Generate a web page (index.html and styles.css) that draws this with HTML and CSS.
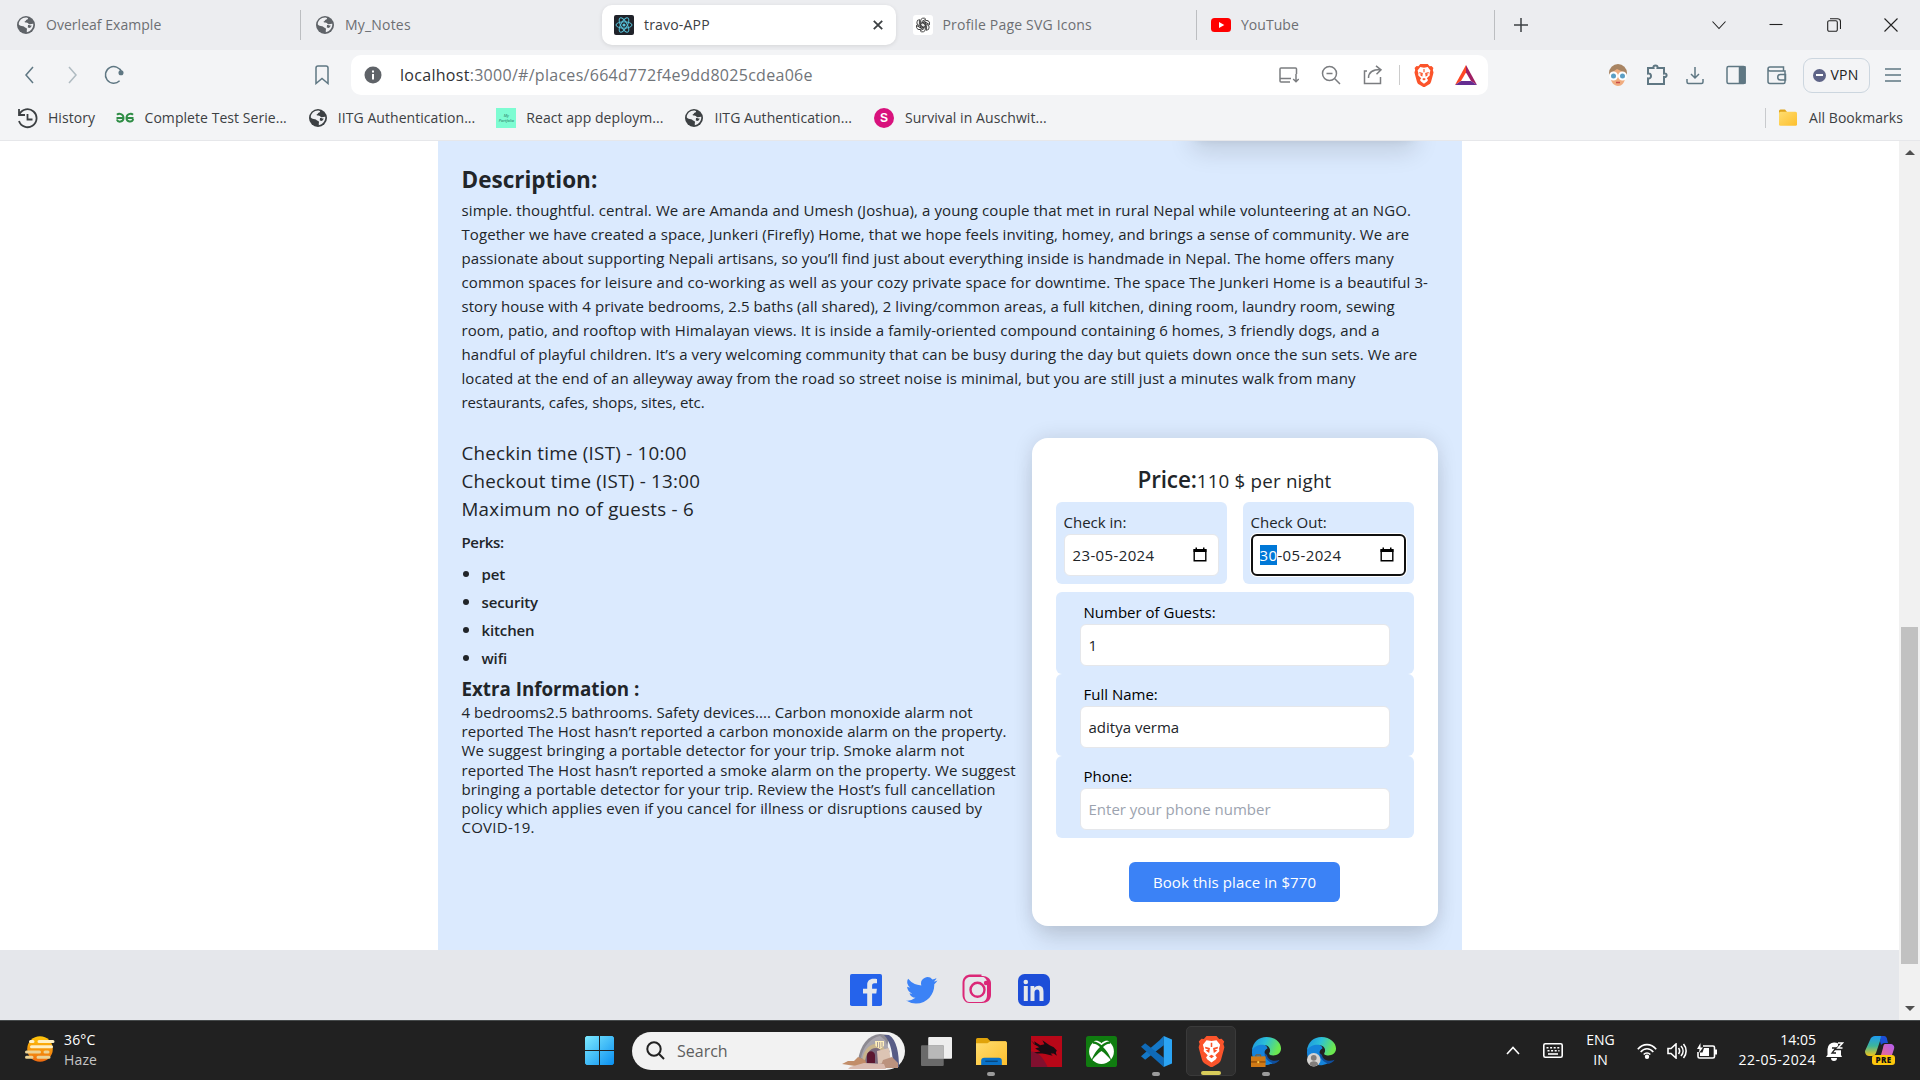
FILE: index.html
```html
<!DOCTYPE html>
<html lang="en">
<head>
<meta charset="utf-8">
<title>travo-APP</title>
<link rel="stylesheet" href="styles.css">
</head>
<body>
<svg class="defs" width="0" height="0" aria-hidden="true">
  <defs>
    <symbol id="globe" viewBox="0 0 18 18"><circle cx="9" cy="9" r="9"/><path fill="#eff0f3" d="M10.2 1.7c1 .2 1.2 1 .5 1.600-.5.5-1.700.4-1.800 1.200-.1.7-1.500.7-1.300 1.600.1.700 1.500.4 2.500.6 1.200.2 1.300 1.600 2.600 1.600 1.500 0 2.700-.8 3.600-.5.300 4-2.600 7.800-6.500 8.400.2-1-.2-1.700.1-2.500.4-1-.3-1.700-1.200-1.900-1-.2-1.300-1.500-2.700-1.500-1.600 0-3.300-.8-4.200-1.700C1.600 4.500 5.600 1 10.200 1.700z"/><path d="M11 9c1.500-.2 2.500 1 4 .6l-2 2.400-2.200-.6z"/></symbol>
    <symbol id="lion" viewBox="0 0 24 28"><path fill="#fb542b" d="M7.500 0h9l2.400 2.700 2.200-.3L23.500 5l-.8 2.200 1 3-3.100 11.300c-.6 2-1.600 2.800-3.200 3.900L12 28.500l-5.400-3.100c-1.600-1.100-2.600-1.900-3.200-3.900L.3 10.200l1-3L.5 5l2.400-2.600 2.200.3z"/><path fill="#fff" d="M12 4.600l4.500-.8 3.300 4-1 3.500.3 2.500-3.700 3.600 1.500 2.100-1.200 1.700L12 24l-3.700-2.800-1.200-1.700 1.500-2.100-3.700-3.600.3-2.500-1-3.500 3.300-4z"/><path fill="#fb542b" d="M6.300 9.700l4.300 1.200-.7 4.500-3.200-2.200 2.600-.9-3-1.100zM17.700 9.700l-4.300 1.200.7 4.500 3.200-2.200-2.600-.9 3-1.100zM9.700 18.300L12 17l2.300 1.300L12 20zM11.300 6h1.400v4h-1.400z"/></symbol>
    <linearGradient id="edgeTop" x1="0" y1="0" x2="1" y2=".3"><stop offset="0" stop-color="#1b8fe0"/><stop offset=".5" stop-color="#2cc0d8"/><stop offset="1" stop-color="#6ce84f"/></linearGradient>
    <symbol id="edge" viewBox="0 0 32 32"><path fill="#0f4f9e" d="M10 14c-2 8 3 15 11 15 4 0 7-2 8.500-4.500-5 2-12 1-13-5z"/><path fill="#1584db" d="M1 17C1 9 7 7 11 8c4 .6 6 3 6 5-3 1-4 5-2 9 1.500 3 4 5 7 6-8 5-21 1-21-11z"/><path fill="url(#edgeTop)" d="M1 15C2 6 8 1 16 1c9 0 15 6 15 12 0 5-4 7-8 7-3 0-5-1-4-2.500 2-3 0-8.500-7-8.500-5 0-9 2-11 6z"/></symbol>
    <linearGradient id="win" x1="0" y1="0" x2="1" y2="1"><stop offset="0" stop-color="#7deaff"/><stop offset="1" stop-color="#0a8ff0"/></linearGradient>
    <linearGradient id="sun" x1="0" y1="0" x2="0" y2="1"><stop offset="0" stop-color="#ffc70a"/><stop offset="1" stop-color="#ee6a10"/></linearGradient>
    <linearGradient id="folder" x1="0" y1="0" x2="1" y2="1"><stop offset="0" stop-color="#ffdd70"/><stop offset="1" stop-color="#fdbf2d"/></linearGradient>
    <linearGradient id="cop1" x1="0" y1="0" x2="0" y2="1"><stop offset="0" stop-color="#1e9bf0"/><stop offset=".5" stop-color="#3db59a"/><stop offset="1" stop-color="#f5c518"/></linearGradient>
    <linearGradient id="cop2" x1="0" y1="1" x2="1" y2="0"><stop offset="0" stop-color="#ff6f70"/><stop offset="1" stop-color="#b15df2"/></linearGradient>
    <symbol id="calendar" viewBox="0 0 14 15"><path fill="none" stroke="#000" stroke-width="1.400" d="M1.200 3h11.600v10.800H1.200z"/><path d="M.5 2h13v3H.5zM2.500.5H4V3H2.500zM10 .5h1.500V3H10z"/></symbol>
  </defs>
</svg>

<header class="browser">
  <div class="tabs">
    <div class="tab tab-first"><svg class="i18 gray"><use href="#globe"/></svg><span>Overleaf Example</span></div>
    <div class="tab tab-notes"><svg class="i18 gray"><use href="#globe"/></svg><span class="wide">My_Notes</span></div>
    <div class="tab tab-active">
      <svg class="i20" viewBox="0 0 20 20"><rect width="20" height="20" rx="2" fill="#20232a"/><g fill="none" stroke="#58c4dc" stroke-width="1"><ellipse cx="10" cy="10" rx="8" ry="3.200"/><ellipse cx="10" cy="10" rx="8" ry="3.200" transform="rotate(60 10 10)"/><ellipse cx="10" cy="10" rx="8" ry="3.200" transform="rotate(120 10 10)"/></g><circle cx="10" cy="10" r="1.600" fill="#58c4dc"/></svg>
      <span class="wide">travo-APP</span>
      <svg class="close" viewBox="0 0 10 10"><path d="M.8.8l8.400 8.400M9.200.8L.8 9.200"/></svg>
    </div>
    <div class="tab tab-gpt">
      <svg class="i20" viewBox="0 0 20 20"><rect width="20" height="20" rx="3" fill="#fff"/><g fill="none" stroke="#333" stroke-width=".9"><path id="petal" d="M7.600 11.300V6a2.900 2.900 0 0 1 5.200-1.800L9 6.400v2.900"/><use href="#petal" transform="rotate(60 10 10)"/><use href="#petal" transform="rotate(120 10 10)"/><use href="#petal" transform="rotate(180 10 10)"/><use href="#petal" transform="rotate(240 10 10)"/><use href="#petal" transform="rotate(300 10 10)"/></g></svg>
      <span class="wide">Profile Page SVG Icons</span>
    </div>
    <div class="tab tab-yt">
      <svg class="i20" viewBox="0 0 20 20"><rect y="3" width="20" height="14" rx="3.500" fill="#f00"/><path fill="#fff" d="M8 7l5.300 3L8 13z"/></svg>
      <span>YouTube</span>
    </div>
    <svg class="plus" viewBox="0 0 14 14"><path d="M7 0v14M0 7h14"/></svg>
    <div class="window-buttons">
      <svg viewBox="0 0 14 14"><path d="M.5 3.500L7 10.500l6.500-7"/></svg>
      <svg viewBox="0 0 14 14"><path d="M.5 6.500h13"/></svg>
      <svg viewBox="0 0 14 14"><path d="M.7 4.200a1.500 1.500 0 0 1 1.500-1.500h6.600a1.500 1.500 0 0 1 1.500 1.500v7.600a1.500 1.500 0 0 1-1.500 1.500H2.200a1.500 1.500 0 0 1-1.500-1.500zM3 .7h7.500a3 3 0 0 1 3 3V11"/></svg>
      <svg viewBox="0 0 14 14"><path d="M.5.500l13 13M13.500.5l-13 13"/></svg>
    </div>
  </div>

  <div class="toolbar">
    <div class="nav">
      <svg viewBox="0 0 20 20"><path d="M13 2L6 10l7 8"/></svg>
      <svg class="dim" viewBox="0 0 20 20"><path d="M7 2l7 8-7 8"/></svg>
      <svg viewBox="0 0 20 20"><path d="M15.600 15.800A8.300 8.300 0 1 1 17.500 7"/><circle cx="17" cy="7.800" r="1.800" fill="#5f7783"/></svg>
    </div>
    <svg class="mark" viewBox="0 0 20 20"><path d="M4 3a2 2 0 0 1 2-2h8a2 2 0 0 1 2 2v15.500l-6-5-6 5z"/></svg>
    <div class="address">
      <svg class="info" viewBox="0 0 18 18"><circle cx="9" cy="9" r="8.500" fill="#5f6368" stroke="none"/><path stroke="#fff" stroke-width="2" d="M9 8v5.500M9 4.500v2"/></svg>
      <span class="url"><b>localhost</b>:3000/#/places/664d772f4e9dd8025cdea06e</span>
      <div class="address-icons">
        <svg viewBox="0 0 20 20"><path d="M11 17H2a1 1 0 0 1-1-1V4a1 1 0 0 1 1-1h14.500a1 1 0 0 1 1 1v5M1 13.500h11M17 9v7.500M14.200 14l2.800 2.800 2.800-2.800"/></svg>
        <svg viewBox="0 0 20 20"><circle cx="8.500" cy="8.500" r="7"/><path d="M13.800 13.800L19 19M5.500 8.500h6"/></svg>
        <svg viewBox="0 0 20 20"><path d="M4 6H1.500v12.500h16V12M5.500 13c0-5 3.500-8.500 12-8.500M13 .8l5 4-4.500 4.400"/></svg>
      </div>
      <i class="bar"></i>
      <svg class="brave" viewBox="0 0 24 28"><use href="#lion"/></svg>
      <svg class="bat" viewBox="0 0 22 20"><path fill="#ff4724" d="M11 0v7.500L6 16l-6 4z"/><path fill="#9e1f63" d="M11 0l11 20-6-4-5-8.500z"/><path fill="#662d91" d="M0 20l6-4h10l6 4z"/></svg>
    </div>
    <div class="extensions">
      <svg class="face" viewBox="0 0 20 22"><circle cx="10" cy="9" r="9" fill="#a88463"/><path fill="#f0ac7f" d="M3 9l6-4 8 4v6c-1 4-3 7-7 7s-7-4-7-7z"/><g fill="#5c9fc5" stroke="#fff" stroke-width="2"><circle cx="5.500" cy="12" r="3.500"/><circle cx="14.500" cy="12" r="3.500"/></g><path stroke="#c94a48" stroke-width="1.500" d="M8 18.500h4"/></svg>
      <svg class="puzzle" viewBox="0 0 22 22"><path d="M2 4h5.500c-.8-3.500 4.800-3.500 4 0H18v5.500c3.500-.8 3.500 4.300 0 3.500V20H2v-5.500c4 .8 4-6 0-5z"/></svg>
      <svg class="download" viewBox="0 0 20 20"><path d="M10 2v11M6 9l4 4 4-4M2 14v3a1.500 1.500 0 0 0 1.500 1.500h13A1.500 1.500 0 0 0 18 17v-3"/></svg>
      <svg viewBox="0 0 20 20"><rect x="1" y="1.500" width="18" height="17" rx="1.500"/><path fill="#5f7783" d="M13.500 2H19v16h-5.500z"/></svg>
      <svg viewBox="0 0 20 20"><path d="M1 4v12.500a2 2 0 0 0 2 2h13.500a1.500 1.500 0 0 0 1.500-1.500V6H3a2 2 0 0 1 0-4h13.500v4M18.500 9.500h-5a2.500 2.500 0 0 0 0 5.500h5z"/></svg>
    </div>
    <div class="vpn"><i></i><span>VPN</span></div>
    <svg class="menu" viewBox="0 0 16 14"><path d="M0 1h16M0 7h16M0 13h16"/></svg>
  </div>

  <nav class="bookmarks">
    <a><svg class="i21" viewBox="0 0 21 21"><path fill="none" stroke="#3c4043" stroke-width="1.800" d="M2.500 6.200A9 9 0 1 1 2 13M2 1v6h6M10.500 6v5.500h5"/></svg><span>History</span></a>
    <a class="b-gfg"><svg class="i20" viewBox="0 0 20 20"><path fill="none" stroke="#2f8d46" stroke-width="2" d="M9 10H1.500M2 6.800C4 4.800 8.500 6 8.500 10S3 15 1.800 11.500M11 10h7.500M18 6.800C16 4.800 11.500 6 11.500 10s5.500 5 6.700 1"/></svg><span>Complete Test Serie...</span></a>
    <a class="b-iitg"><svg class="i18 dark"><use href="#globe"/></svg><span>IITG Authentication...</span></a>
    <a class="b-react"><span class="my-app"><em>My</em><em>Portfolio</em></span><span>React app deploym...</span></a>
    <a class="b-iitg"><svg class="i18 dark"><use href="#globe"/></svg><span>IITG Authentication...</span></a>
    <a class="b-pink"><span class="pink-s">S</span><span>Survival in Auschwit...</span></a>
    <a class="b-all"><svg class="i20" viewBox="0 0 20 20"><path fill="#e0a51c" d="M1 3a1.500 1.500 0 0 1 1.500-1.500H7L9 4h9v8H1z"/><rect x="1" y="3.800" width="18" height="14" rx="1.500" fill="url(#folder)"/></svg><span>All Bookmarks</span></a>
  </nav>
</header>

<div class="viewport">
  <div class="page">
    <main class="place">
      <div class="photo-button"></div>
      <h2>Description:</h2>
      <p class="description"><span>simple. thoughtful. central. We are Amanda and Umesh (Joshua), a young couple that met in rural Nepal while volunteering at an NGO.</span>
        <span>Together we have created a space, Junkeri (Firefly) Home, that we hope feels inviting, homey, and brings a sense of community. We are</span>
        <span>passionate about supporting Nepali artisans, so you’ll find just about everything inside is handmade in Nepal. The home offers many</span>
        <span>common spaces for leisure and co-working as well as your cozy private space for downtime. The space The Junkeri Home is a beautiful 3-</span>
        <span>story house with 4 private bedrooms, 2.5 baths (all shared), 2 living/common areas, a full kitchen, dining room, laundry room, sewing</span>
        <span>room, patio, and rooftop with Himalayan views. It is inside a family-oriented compound containing 6 homes, 3 friendly dogs, and a</span>
        <span>handful of playful children. It’s a very welcoming community that can be busy during the day but quiets down once the sun sets. We are</span>
        <span>located at the end of an alleyway away from the road so street noise is minimal, but you are still just a minutes walk from many</span>
        <span>restaurants, cafes, shops, sites, etc.</span></p>
      <div class="columns">
        <section class="details">
          <div class="times">Checkin time (IST) - 10:00<br>Checkout time (IST) - 13:00<br>Maximum no of guests - 6</div>
          <h4>Perks:</h4>
          <ul><li>pet</li><li>security</li><li>kitchen</li><li>wifi</li></ul>
          <h3>Extra Information :</h3>
          <p class="extra"><span>4 bedrooms2.5 bathrooms. Safety devices.... Carbon monoxide alarm not</span>
            <span>reported The Host hasn’t reported a carbon monoxide alarm on the property.</span>
            <span>We suggest bringing a portable detector for your trip. Smoke alarm not</span>
            <span>reported The Host hasn’t reported a smoke alarm on the property. We suggest</span>
            <span>bringing a portable detector for your trip. Review the Host’s full cancellation</span>
            <span>policy which applies even if you cancel for illness or disruptions caused by</span>
            <span>COVID-19.</span></p>
        </section>
        <form class="booking">
          <div class="price"><b>Price:</b><span>110 $ per night</span></div>
          <div class="dates">
            <div class="date"><label>Check in:</label><div class="date-field"><span class="digits">23-05-2024</span><svg><use href="#calendar"/></svg></div></div>
            <div class="date"><label>Check Out:</label><div class="date-field focused"><span class="digits"><mark>30</mark>-05-2024</span><svg><use href="#calendar"/></svg></div></div>
          </div>
          <div class="field"><label>Number of Guests:</label><input type="text" value="1"></div>
          <div class="field"><label>Full Name:</label><input type="text" value="aditya verma"></div>
          <div class="field"><label>Phone:</label><input type="text" placeholder="Enter your phone number"></div>
          <button type="button">Book this place in $770</button>
        </form>
      </div>
    </main>
    <footer class="social">
      <svg viewBox="0 0 32 32"><rect width="32" height="32" rx="1.800" fill="#2563eb"/><path fill="#e5e7eb" d="M17.200 32V19.600H13v-4.800h4.200v-3.700C17.200 7 19.700 4.800 23.300 4.800c1.800 0 3.300.1 3.700.2v4.300h-2.500c-2 0-2.400 1-2.400 2.400v3.100h4.800l-.6 4.800h-4.200V32z"/></svg>
      <svg viewBox="0 0 24 24"><path fill="#3b82f6" d="M23.600 4.900a9.600 9.600 0 0 1-2.800.8 4.900 4.900 0 0 0 2.100-2.700 9.700 9.700 0 0 1-3.100 1.200 4.800 4.800 0 0 0-8.300 4.400A13.700 13.700 0 0 1 1.600 3.600a4.800 4.800 0 0 0 1.500 6.500 4.800 4.800 0 0 1-2.200-.6c0 2.300 1.600 4.400 3.900 4.900a4.900 4.900 0 0 1-2.200.1 4.900 4.900 0 0 0 4.500 3.400A9.700 9.700 0 0 1 0 19.900a13.700 13.700 0 0 0 7.400 2.200c9 0 14.100-7.600 13.800-14.500a9.900 9.900 0 0 0 2.400-2.700z"/></svg>
      <svg viewBox="0 0 32 32"><path fill="#db2777" fill-rule="evenodd" d="M8 .5h11.500V2h1.500c4 0 8 3 8 7v12c0 5-4 8-8.500 8H7c-3 0-6.500-3.500-6.500-8V9C.500 4 4 .5 8 .5zM8 3C5 3 2.500 5.500 2.500 9v12c0 4 2 7 4.500 7h12.500c3.500 0 5.500-3 5.500-7V9c0-3.500-2-6-4.500-6z"/><circle cx="15.500" cy="15.800" r="7" fill="none" stroke="#db2777" stroke-width="2.400"/><circle cx="24" cy="9" r="2.200" fill="#db2777"/></svg>
      <svg viewBox="0 0 32 32"><rect width="32" height="32" rx="6.500" fill="#1d4ed8"/><g fill="#e5e7eb"><circle cx="7.800" cy="8" r="2.300"/><path d="M5.800 12h4v15h-4zM12.500 12h3.800v2c1-1.600 2.400-2.300 4.300-2.300 3.600 0 4.900 2.300 4.900 6V27h-4v-8.200c0-2-.5-3.300-2.300-3.300-2 0-2.700 1.500-2.700 3.300V27h-4z"/></g></svg>
    </footer>
  </div>
  <div class="scrollbar"><i class="up"></i><div class="thumb"></div><i class="down"></i></div>
</div>

<div class="taskbar">
  <svg class="weather" viewBox="0 0 30 30"><circle cx="15" cy="15" r="12.800" fill="url(#sun)"/><g stroke="#fff0c4" stroke-width="3" stroke-linecap="round"><path d="M5.500 7.500H8M14 7.500h14M6.500 12.800h20"/><path stroke="#ecd394" d="M1.500 18h13M20 18h3M1.500 23.300H7M13 23.300h11"/></g></svg>
  <div class="weather-text"><span>36°C</span><span class="soft">Haze</span></div>
  <svg class="start" viewBox="0 0 29 29"><path fill="url(#win)" d="M1.500 0H14v14H0V1.500zM15 0h12.500L29 1.500V14H15zM0 15h14v14H1.500L0 27.500zM15 15h14v12.500L27.500 29H15z"/></svg>
  <div class="search">
    <svg class="lens" viewBox="0 0 19 19"><circle cx="8" cy="8" r="6.700"/><path d="M12.800 12.800L18 18"/></svg>
    <span>Search</span>
    <svg class="arch" viewBox="0 0 58 36"><path fill="#8d8a92" d="M16 28C18 12 26 2 38 1l9 1-4 30H18z"/><path fill="#575c86" d="M42 2l5 0c8 5 10 19 10 32l-6 1c0-14-2-26-9-33z"/><path fill="#a9a5ad" d="M19 25C21 14 28 5 38 3l5 4 5 12-12 8z"/><path fill="#c9b48c" d="M20 31c0-12 6-20 14-20 6 0 12 5 12 20z"/><path fill="#78687b" d="M23 31c0-10 5-16 11-16 5 0 8 5 8 16z"/><path fill="#5b1730" d="M25 30v-8c1-5 7-5 8 0v8z"/><path fill="#dcc4b4" d="M35 18l12-3 2 15-13 1z"/><path fill="#fff0bd" d="M33 8h9v5l-4 3-4.500-3z"/><path fill="#a89a98" d="M35 9h1v5h-1zM37.200 9h1v6h-1zM39.500 9h1v5h-1z"/><path fill="#c28d69" d="M0 31l6-3h6l4-4 7 3 2 5-5 2z"/><path fill="#bb927e" d="M41 27l9-3 6 6v5H38z"/><path fill="#dabbb0" d="M8 34l14-4 20 1 2 5H6z"/></svg>
  </div>
  <div class="apps">
    <div class="app"><svg viewBox="0 0 30 30"><rect x="7" y="1" width="23" height="21" rx="1" fill="#eee"/><rect y="9" width="22" height="20" rx="1" fill="#777" opacity=".85"/><path fill="#b8b8b8" d="M7 9h15v13H7z"/></svg></div>
    <div class="app open"><svg viewBox="0 0 30 30"><path fill="#e0a30a" d="M0 3.500A1.500 1.500 0 0 1 1.500 2H11l3 3h15v8H0z"/><path fill="url(#folder)" d="M0 7h11l3-2h14.500A1.500 1.500 0 0 1 30 6.500V28H0z"/><path fill="#0a72c8" d="M5 28v-4a3 3 0 0 1 3-3h14a3 3 0 0 1 3 3v4z"/><path stroke="#07477e" stroke-width="1.400" d="M9 24.500h12"/></svg></div>
    <div class="app"><svg viewBox="0 0 30 30"><path fill="#b80718" d="M0 0h30v30H0z"/><path fill="#81102f" d="M0 15c7 0 12 6 16 15H0z"/><path fill="#190d13" d="M0 4l4 4-1-3 6 4 4-1-2-4 7 5 4 2 3 3-1 2 1 3-3-2-3 0 2 2-5-1c-5-2-9 0-13-2l6-1-5-3 4-1-5-3z"/></svg></div>
    <div class="app"><svg viewBox="0 0 30 30"><rect width="30" height="30" rx="2.500" fill="#107c10"/><circle cx="15" cy="15" r="12" fill="#fff"/><path fill="#107c10" d="M8.500 4.500C11 4 14 6 15 7c1-1 4-3 6.500-2.500C19 2.500 17 2 15 2s-4 .5-6.500 2.500zM15 9.500C10.500 13 6 20 5.500 24 8.500 20 12 16.500 15 14.500c3 2 6.500 5.500 9.500 9.500C24 20 19.500 13 15 9.500z"/><path fill="none" stroke="#107c10" stroke-width="2.200" d="M6.500 6.500c3-.5 6 1.500 8.500 4 2.500-2.500 5.500-4.500 8.500-4"/></svg></div>
    <div class="app open"><svg viewBox="0 0 30 30"><path fill="#1478c8" d="M22 0v9L4 23l-4-3.500L18 4z"/><path fill="#0f6ab8" d="M0 10.500L4 7l18 14v9z"/><path fill="#2ba4f4" d="M22 0l8 3.500v23L22 30z"/></svg></div>
    <div class="app current"><svg viewBox="0 0 24 28"><use href="#lion"/></svg></div>
    <div class="app open"><svg viewBox="0 0 32 32"><use href="#edge"/><path fill="#d07a16" d="M0 21h15v11H0z"/><path fill="none" stroke="#9a550c" d="M5 21v-1.500h5V21"/><path fill="#95500b" d="M0 26h15v1.500H0z"/><path fill="#ffd24a" d="M6.500 26h2v2h-2z"/></svg></div>
    <div class="app"><svg viewBox="0 0 32 32"><use href="#edge"/><circle cx="8" cy="24.500" r="7" fill="#d6d4d2"/><circle cx="8" cy="22.500" r="3" fill="#817d7b"/><path fill="#817d7b" d="M3.500 29.500c.5-4.500 8.500-4.500 9 0-2 2.500-7 2.500-9 0z"/></svg></div>
  </div>
  <div class="tray">
    <svg class="t-chev" viewBox="0 0 14 9"><path d="M1 8l6-6.500L13 8"/></svg>
    <svg class="t-key" viewBox="0 0 20 15"><rect x=".8" y=".8" width="18.400" height="13.400" rx="1.500"/><path stroke-dasharray="2 1.600" d="M3.500 4.700h13M4.500 7.700h12"/><path d="M5 11h10"/></svg>
    <div class="lang"><span>ENG</span><span>IN</span></div>
    <svg class="t-wifi" viewBox="0 0 20 16"><path d="M.8 6.200C6 .1 14 .1 19.200 6.200M3.700 9c3.500-4.300 9.100-4.300 12.600 0M6.700 11.600c1.900-2.200 4.700-2.200 6.600 0"/><circle cx="10" cy="13.800" r="1.400" fill="#fff"/></svg>
    <svg class="t-vol" viewBox="0 0 20 16"><path d="M1 5.500h3l5-4.500v14l-5-4.500H1zM11.500 5c1.300 1.700 1.300 4.300 0 6M14 3c2.700 3 2.700 7 0 10M16.500 1c3.500 4 3.500 10 0 14"/></svg>
    <svg class="t-bat" viewBox="0 0 20 16"><path d="M6 3h10a1.500 1.500 0 0 1 1.500 1.500v9A1.500 1.500 0 0 1 16 15H2.500A1.500 1.500 0 0 1 1 13.500V9"/><path fill="#fff" stroke="none" d="M7 5h5v8H3V9.500h2.500zM18 6.500h2v5h-2zM3.500 0L0 6h2.500L2 10l4-5.500H3.500z"/></svg>
    <div class="clock"><span>14:05</span><span class="digits">22-05-2024</span></div>
    <svg class="t-bell" viewBox="0 0 18 20"><path fill="#fff" d="M1.500 14V8a6.500 6.500 0 0 1 7-6.500l3 .5 3.500 6v6l1 2H0zM5 17h6a3 3 0 0 1-6 0z"/><path fill="none" stroke="#222" stroke-width="1.300" d="M6 7h4l-4 5h4"/><path fill="none" stroke="#222" stroke-width="3.500" d="M12 2.500h4.500L12 7.500h4.500"/><path fill="none" stroke="#fff" stroke-width="1.500" d="M12 2h4.500L12 7h4.500"/></svg>
    <div class="copilot"><svg viewBox="0 0 30 30"><path fill="url(#cop2)" d="M20 8h5c3 0 5 2 4 5l-2 6c-1 3-3 5-5 5H12c2 0 3-3 4-5l2-7c.5-3 1-4 2-4z"/><path fill="url(#cop1)" d="M5 4c1-3 3-4 5-4h9c-2 1-3 2-4 5l-4 12c-1 2-2 3-4 3H4c-3 0-4-3-4-5z"/><path fill="#1b4fd6" d="M16 0h3c2 0 3 2 3 3l1 4h-4c-1 0-2 1-3 2l-1-4z"/></svg><b>PRE</b></div>
  </div>
</div>
</body>
</html>
```
FILE: styles.css
```css
* { box-sizing: border-box; margin: 0; padding: 0; }
body { width: 1920px; height: 1080px; overflow: hidden; display: flex; flex-direction: column; font: 400 15px/24px "Open Sans", "Noto Sans", sans-serif; color: #212529; background: #fff; }
svg { display: block; flex: none; }
.defs { position: absolute; }
.i18 { width: 18px; height: 18px; }
.i20 { width: 20px; height: 20px; }
.i21 { width: 21px; height: 21px; }
.gray { fill: #5f6368; }
.dark { fill: #3c4043; }

/* Browser chrome */
.browser { height: 141px; flex: none; background: #f3f4f6; border-bottom: 1px solid #e6e7ea; font-size: 14px; letter-spacing: .03px; }
.tabs { height: 50px; background: #ecedf0; display: flex; align-items: center; color: #6d6f73; }
.tab { height: 30px; display: flex; align-items: center; gap: 11px; white-space: nowrap; flex: none; }
.wide { letter-spacing: .19px; }
.tab-first { width: 301px; padding-left: 17px; border-right: 1px solid #bcbec1; }
.tab-notes { width: 301px; padding-left: 15px; }
.tab-active { width: 294px; height: 40px; padding: 0 12px 0 12px; background: #fff; border-radius: 10px; color: #3c4043; gap: 10px; box-shadow: 0 1px 4px rgba(0,0,0,.1); }
.close { width: 10px; height: 10px; margin-left: auto; margin-right: 1px; stroke: #3c4043; stroke-width: 1.800; }
.tab-gpt { width: 301px; padding-left: 17px; gap: 9.500px; border-right: 1px solid #bcbec1; }
.tab-yt { width: 298px; padding-left: 14px; gap: 10px; border-right: 1px solid #bcbec1; }
.plus { width: 14px; height: 14px; margin-left: 19px; stroke: #3c4043; stroke-width: 1.500; }
.window-buttons { margin-left: auto; padding-right: 22px; display: flex; gap: 43.500px; fill: none; stroke: #222; stroke-width: 1.100; }
.window-buttons svg { width: 14px; height: 14px; }

.toolbar { height: 50px; display: flex; align-items: center; fill: none; stroke: #5f7783; stroke-width: 1.500; }
.nav { display: flex; gap: 22px; padding-left: 20px; width: 312px; }
.nav svg { width: 20px; height: 20px; }
.nav .dim { opacity: .45; }
.mark { width: 20px; height: 20px; }
.address { width: 1137px; height: 40px; margin-left: 19px; padding: 0 11px 0 13px; display: flex; align-items: center; background: #fff; border-radius: 10px; }
.info { width: 18px; height: 18px; }
.url { margin-left: 18px; font-size: 16px; letter-spacing: .29px; color: #707479; }
.url b { font-weight: 400; color: #303134; }
.address-icons { margin-left: auto; display: flex; gap: 22px; stroke: #7b7d80; }
.address-icons svg { width: 20px; height: 20px; }
.bar { width: 1px; height: 20px; margin-left: 16px; background: #ccc; }
.brave { width: 20px; height: 23px; margin-left: 14px; stroke: none; }
.bat { width: 22px; height: 20px; margin-left: 21px; stroke: none; }
.extensions { display: flex; align-items: center; gap: 21px; margin-left: 119.500px; }
.extensions svg { width: 20px; height: 20px; }
.extensions .face { height: 22px; stroke: none; }
.extensions .puzzle { width: 22px; height: 22px; margin-right: -3.500px; stroke-width: 2; margin-left: -3px; }
.vpn { width: 67px; height: 35px; margin-left: 15.500px; display: flex; align-items: center; gap: 5px; padding-left: 9px; border: 1px solid #ccd6df; border-radius: 9px; color: #222; letter-spacing: .2px; }
.vpn i { width: 13px; height: 13px; border-radius: 50%; background: linear-gradient(#fff, #fff) center/7px 2px no-repeat #5e6487; }
.menu { width: 16px; height: 14px; margin-left: 15.500px; }

.bookmarks { height: 36px; display: flex; align-items: center; padding: 0 17px; color: #3c4043; }
.bookmarks a { display: flex; align-items: center; gap: 10px; white-space: nowrap; letter-spacing: .05px; }
.bookmarks .b-gfg { margin-left: 19.500px; }
.bookmarks .b-iitg { margin-left: 22px; gap: 11px; }
.bookmarks .b-react { margin-left: 21px; }
.bookmarks .b-pink { margin-left: 22px; gap: 11px; letter-spacing: .08px; }
.bookmarks .b-all { margin-left: auto; padding-left: 12px; border-left: 1px solid #c8cacd; height: 20px; gap: 11px; }
.my-app { width: 20px; height: 20px; background: #7dfcd2; display: flex; flex-direction: column; justify-content: center; align-items: center; }
.my-app em { font-size: 4px; line-height: 5px; letter-spacing: 0; color: #1c6b55; }
.pink-s { width: 20px; height: 20px; border-radius: 50%; background: #d8127d; color: #fff; font: 700 12px/20px "Liberation Sans", sans-serif; text-align: center; }

/* Page */
.viewport { height: 879px; flex: none; display: flex; }
.page { flex: 1; overflow: hidden; }
.place { position: relative; width: 1024px; height: 809px; margin: 0 auto; padding: 23px 24px 0; background: #dbeafe; overflow: hidden; }
.photo-button { position: absolute; right: 40px; top: -44px; width: 236px; height: 40px; border-radius: 16px; box-shadow: 0 20px 25px -5px rgba(0,0,0,.12), 0 8px 10px -6px rgba(0,0,0,.12); }
h2 { font-size: 22.500px; line-height: 32px; font-weight: 700; }
.description { padding-top: 1.500px; }
.description span, .extra span { display: block; white-space: nowrap; }
.description span { letter-spacing: .096px; }
.description span:nth-child(2), .description span:nth-child(3) { letter-spacing: .07px; }
.description span:nth-child(4) { letter-spacing: .103px; }
.description span:nth-child(5), .description span:nth-child(8) { letter-spacing: .06px; }
.description span:nth-child(9) { letter-spacing: -.09px; }
.columns { display: flex; justify-content: space-between; margin-top: 24.500px; }
.times { font-size: 18.750px; line-height: 28px; letter-spacing: .26px; padding-top: 1px; }
h4 { font-size: 15px; line-height: 24px; font-weight: 600; margin-top: 7px; letter-spacing: -.35px; }
ul { padding-left: 20px; margin-top: 6px; }
li { line-height: 28px; font-weight: 600; letter-spacing: -.13px; }
li::marker { font-size: 17px; }
h3 { font-size: 18.750px; line-height: 24px; font-weight: 700; margin-top: 5px; }
.extra { line-height: 19.200px; margin-top: 2px; letter-spacing: .085px; }
.extra span:nth-child(1) { letter-spacing: .014px; }
.extra span:nth-child(2) { letter-spacing: .055px; }
.extra span:nth-child(3) { letter-spacing: .115px; }
.extra span:nth-child(7) { letter-spacing: .25px; }

.booking { width: 406px; height: 488px; padding: 24px; background: #fff; border-radius: 16px; display: flex; flex-direction: column; align-items: center; box-shadow: 0 20px 25px -5px rgba(0,0,0,.1), 0 0 20px rgba(0,0,0,.12); }
.price { height: 40px; display: flex; align-items: baseline; font-size: 18.750px; line-height: 36px; letter-spacing: .2px; }
.price b { font-size: 22.500px; font-weight: 600; letter-spacing: -.15px; }
.dates { width: 100%; display: flex; gap: 16px; }
.date { flex: 1; height: 82px; padding: 8px; background: #dbeafe; border-radius: 6px; }
label { display: block; height: 24px; line-height: 24px; }
.date-field { height: 42px; display: flex; align-items: center; justify-content: space-between; padding: 0 11px 0 8px; background: #fff; border: 1px solid #e5e7eb; border-radius: 6px; }
.date-field svg { width: 14px; height: 15px; margin-bottom: 1px; }
.focused { border: 2px solid #101010; box-shadow: 0 0 0 1px #fff; padding: 0 10px 0 7px; }
.digits { letter-spacing: .37px; }
mark { background: #0078d7; color: #fff; }
.field { width: 100%; height: 82px; padding: 8px 24px 0; background: #dbeafe; border-radius: 6px; color: #000; }
.dates + .field { margin-top: 8px; }
.field label { padding-left: 4px; }
input { display: block; width: 310px; height: 42px; padding: 0 8px; border: 1px solid #e5e7eb; border-radius: 6px; font: inherit; color: #212529; background: #fff; }
::placeholder { color: #9ca3af; opacity: 1; }
button { width: 211px; height: 40px; margin-top: 24px; border: 0; border-radius: 6px; background: #3b82f6; color: #fff; font: inherit; letter-spacing: .1px; }
.social { height: 70px; padding-top: 24px; background: #e5e7eb; display: flex; justify-content: center; gap: 24px; }
.social svg { width: 32px; height: 32px; }
.scrollbar { width: 21px; background: #f1f1f1; display: flex; flex-direction: column; align-items: center; padding: 9px 0 9px; }
.scrollbar i { border: 5px solid transparent; width: 0; height: 0; }
.up { border-bottom-color: #505050 !important; border-top: 0 !important; }
.down { border-top-color: #505050 !important; border-bottom: 0 !important; margin-top: auto; }
.thumb { width: 17px; height: 337px; margin-top: 472px; background: #c1c1c1; }

/* Taskbar */
.taskbar { height: 60px; flex: none; background: #212121; border-top: 1px solid #464a4b; display: flex; align-items: center; color: #fff; font-size: 14px; }
.weather { width: 30px; height: 30px; margin-left: 25px; margin-top: -3px; }
.weather-text { width: 80px; margin: -2px 0 0 9px; display: flex; flex-direction: column; line-height: 20px; letter-spacing: .15px; }
.soft { color: #c5c5c5; }
.start { width: 29px; height: 29px; margin-left: 441px; }
.search { width: 273px; height: 38px; margin-left: 18px; padding: 0 5px 0 14px; border-radius: 19px; background: #f2f2f2; color: #5e5e5e; display: flex; align-items: center; gap: 12px; font-size: 16px; }
.lens { width: 19px; height: 19px; fill: none; stroke: #222; stroke-width: 2; }
.arch { width: 58px; height: 36px; margin-left: auto; }
.apps { display: flex; gap: 5px; margin-left: 6px; }
.app { width: 50px; height: 50px; padding-top: 10px; border-radius: 5px; display: flex; flex-direction: column; align-items: center; justify-content: space-between; }
.app svg { width: 31px; height: 31px; }
.open::after { content: ""; width: 8px; height: 4px; border-radius: 2px; background: #9b9b9b; }
.current { background: #2e2e2e; border: 1px solid #3a3a3a; padding-top: 9px; }
.current::after { content: ""; width: 20px; height: 4px; border-radius: 2px; background: #d8cc5a; }
.tray { margin-left: auto; display: flex; align-items: center; fill: none; stroke: #fff; stroke-width: 1.600; padding-right: 25px; }
.t-chev { width: 14px; height: 9px; }
.t-key { width: 20px; height: 15px; margin-left: 23px; }
.lang { width: 29px; margin: -2px 0 0 23.500px; display: flex; flex-direction: column; align-items: center; line-height: 20px; }
.t-wifi, .t-vol, .t-bat { width: 20px; height: 16px; margin-left: 10px; }
.t-wifi { margin-left: 22px; }
.clock { width: 79px; margin: -2px 0 0 20px; display: flex; flex-direction: column; align-items: flex-end; line-height: 20px; white-space: nowrap; }
.clock .digits { letter-spacing: .44px; }
.t-bell { width: 18px; height: 20px; margin-left: 10px; stroke: none; }
.copilot { position: relative; width: 30px; height: 30px; margin-left: 21px; }
.copilot svg { width: 30px; height: 30px; stroke: none; }
.copilot b { position: absolute; left: 7px; bottom: 1px; width: 23px; height: 10px; border-radius: 3px; background: #fdc70c; color: #111; font: 800 8px/10px "Open Sans", sans-serif; text-align: center; letter-spacing: .3px; }
```
